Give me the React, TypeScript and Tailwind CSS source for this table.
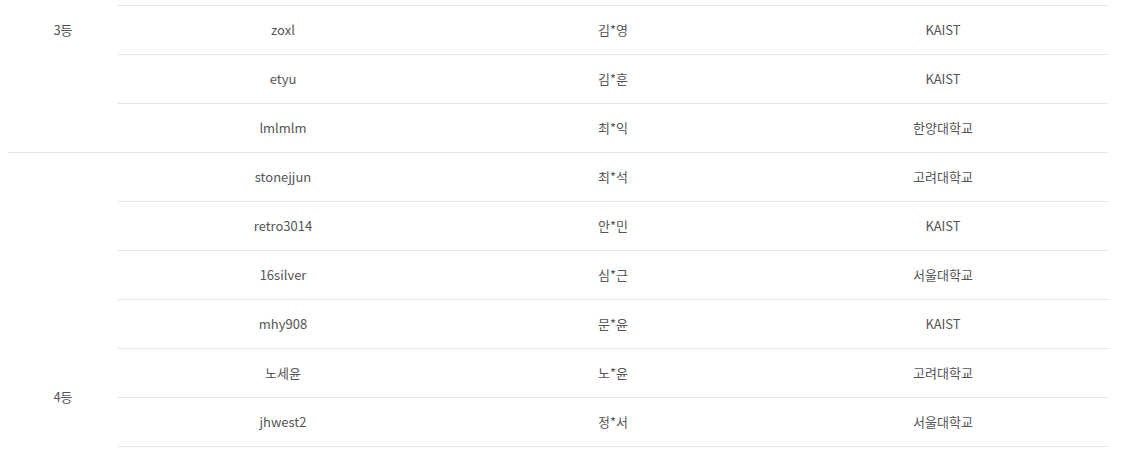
import React from 'react';

interface Entry {
  handle: string;
  name: string;
  school: string;
}

interface RankGroup {
  rank: string;
  entries: Entry[];
}

// first two 3등 rows sit above the visible area, so they hold no text
const groups: RankGroup[] = [
  {
    rank: '3등',
    entries: [
      { handle: '', name: '', school: '' },
      { handle: '', name: '', school: '' },
      { handle: 'zoxl', name: '김*영', school: 'KAIST' },
      { handle: 'etyu', name: '김*훈', school: 'KAIST' },
      { handle: 'lmlmlm', name: '최*익', school: '한양대학교' }
    ]
  },
  {
    rank: '4등',
    entries: [
      { handle: 'stonejjun', name: '최*석', school: '고려대학교' },
      { handle: 'retro3014', name: '안*민', school: 'KAIST' },
      { handle: '16silver', name: '심*근', school: '서울대학교' },
      { handle: 'mhy908', name: '문*윤', school: 'KAIST' },
      { handle: '노세윤', name: '노*윤', school: '고려대학교' },
      { handle: 'jhwest2', name: '정*서', school: '서울대학교' },
      { handle: '', name: '', school: '' },
      { handle: '', name: '', school: '' },
      { handle: '', name: '', school: '' },
      { handle: '', name: '', school: '' }
    ]
  }
];

const cell = 'h-[49px] p-0 border-b border-[#e5e5e5] text-center align-middle';

const App: React.FC = () => {
  return (
    <div
      className="w-[1140px] h-[450px] overflow-hidden bg-white text-[13px] text-[#555]"
      style={{ fontFamily: '"Noto Sans CJK KR", "Noto Sans", sans-serif' }}
    >
      <div className="mt-[-93px] px-2">
        <table className="w-[1100px] border-collapse table-fixed">
          <colgroup>
            <col className="w-[110px]" />
            <col className="w-[330px]" />
            <col className="w-[330px]" />
            <col className="w-[330px]" />
          </colgroup>
          <tbody>
            {groups.map((group) =>
              group.entries.map((entry, index) => (
                <tr key={group.rank + index}>
                  {index === 0 && (
                    <td rowSpan={group.entries.length} className={cell}>
                      {group.rank}
                    </td>
                  )}
                  <td className={cell}>{entry.handle}</td>
                  <td className={cell}>{entry.name}</td>
                  <td className={cell}>{entry.school}</td>
                </tr>
              ))
            )}
          </tbody>
        </table>
      </div>
    </div>
  );
};

export default App;
